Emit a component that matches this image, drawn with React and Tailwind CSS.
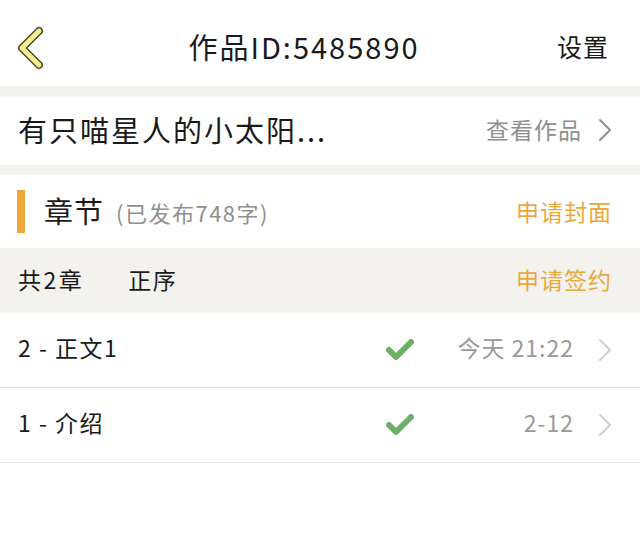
const FONT = { fontFamily: '"Noto Sans CJK SC", "Noto Sans", sans-serif' };

function Back() {
  return (
    <svg width="40" height="48" viewBox="0 0 40 48" className="block">
      <polyline points="24,9 7,26 24,43" fill="none" stroke="#4a4a3a" strokeWidth="8" strokeLinecap="round" strokeLinejoin="round" />
      <polyline points="24,9 7,26 24,43" fill="none" stroke="#f5ec8a" strokeWidth="5" strokeLinecap="round" strokeLinejoin="round" />
    </svg>
  );
}

function Chevron({ color }) {
  return (
    <svg width="14" height="24" viewBox="0 0 14 24" className="block">
      <polyline points="2,2 12,12 2,22" fill="none" stroke={color} strokeWidth="2" strokeLinecap="round" strokeLinejoin="round" />
    </svg>
  );
}

function Check() {
  return (
    <svg width="28" height="22" viewBox="0 0 28 22" className="block">
      <polyline points="3,11 10,18 25,3" fill="none" stroke="#6bb066" strokeWidth="6" strokeLinecap="round" strokeLinejoin="round" />
    </svg>
  );
}

const CHAPTERS = [
  { title: '2 - 正文1', time: '今天 21:22' },
  { title: '1 - 介绍', time: '2-12' },
];

export default function App() {
  return (
    <div className="w-[640px] h-[556px] bg-white text-[#1a1a1a] overflow-hidden" style={FONT}>
      {/* nav bar */}
      <div className="h-[86px] flex items-center justify-between pl-[15px] pr-[31px] pt-[6px]">
        <Back />
        <div className="text-[29px] leading-none tracking-[2px] mr-[4px]">作品ID:5485890</div>
        <div className="text-[25px] leading-none tracking-[1px]">设置</div>
      </div>

      <div className="bg-[#f3f2ef] pt-[11px] pb-[10px]">
        <div className="bg-white h-[68px] flex items-center justify-between pl-[18px] pr-[28px] pb-[3px]">
          <div className="text-[29px] leading-none tracking-[2px]">有只喵星人的小太阳...</div>
          <div className="flex items-center gap-[16px]">
            <span className="text-[23px] text-[#8f8f8f] leading-none tracking-[1px]">查看作品</span>
            <Chevron color="#8f8f8f" />
          </div>
        </div>
      </div>

      {/* chapter header */}
      <div className="h-[73px] flex items-center justify-between pl-[17px] pr-[28px]">
        <div className="flex items-center">
          <div className="w-[8px] h-[43px] bg-[#eea73b]" />
          <span className="ml-[19px] text-[29px] leading-none tracking-[1px] mb-[2px]">章节</span>
          <span className="ml-[12px] text-[22px] text-[#8f8f8f] leading-none tracking-[1.5px]">(已发布748字)</span>
        </div>
        <span className="text-[23px] text-[#e8a83d] leading-none tracking-[1px]">申请封面</span>
      </div>

      <div className="h-[65px] bg-[#f3f2ef] flex items-center justify-between pl-[18px] pr-[28px] pb-[2px]">
        <div className="flex items-center text-[23px] leading-none tracking-[2.5px]">
          <span>共2章</span>
          <span className="ml-[44px] tracking-[1.5px]">正序</span>
        </div>
        <span className="text-[23px] text-[#e8a83d] leading-none tracking-[1px]">申请签约</span>
      </div>

      {CHAPTERS.map((c) => (
        <div key={c.title} className="h-[75px] border-b border-[#e3e3e3] flex items-center pl-[18px] pr-[28px]">
          <span className="flex-1 text-[23px] leading-none tracking-[1.5px] mb-[5px]">{c.title}</span>
          <Check />
          <span className="w-[160px] text-right text-[23px] text-[#9a9a9a] leading-none tracking-[1px] mb-[5px]">{c.time}</span>
          <div className="ml-[24px]">
            <Chevron color="#cfcfcf" />
          </div>
        </div>
      ))}
    </div>
  );
}
